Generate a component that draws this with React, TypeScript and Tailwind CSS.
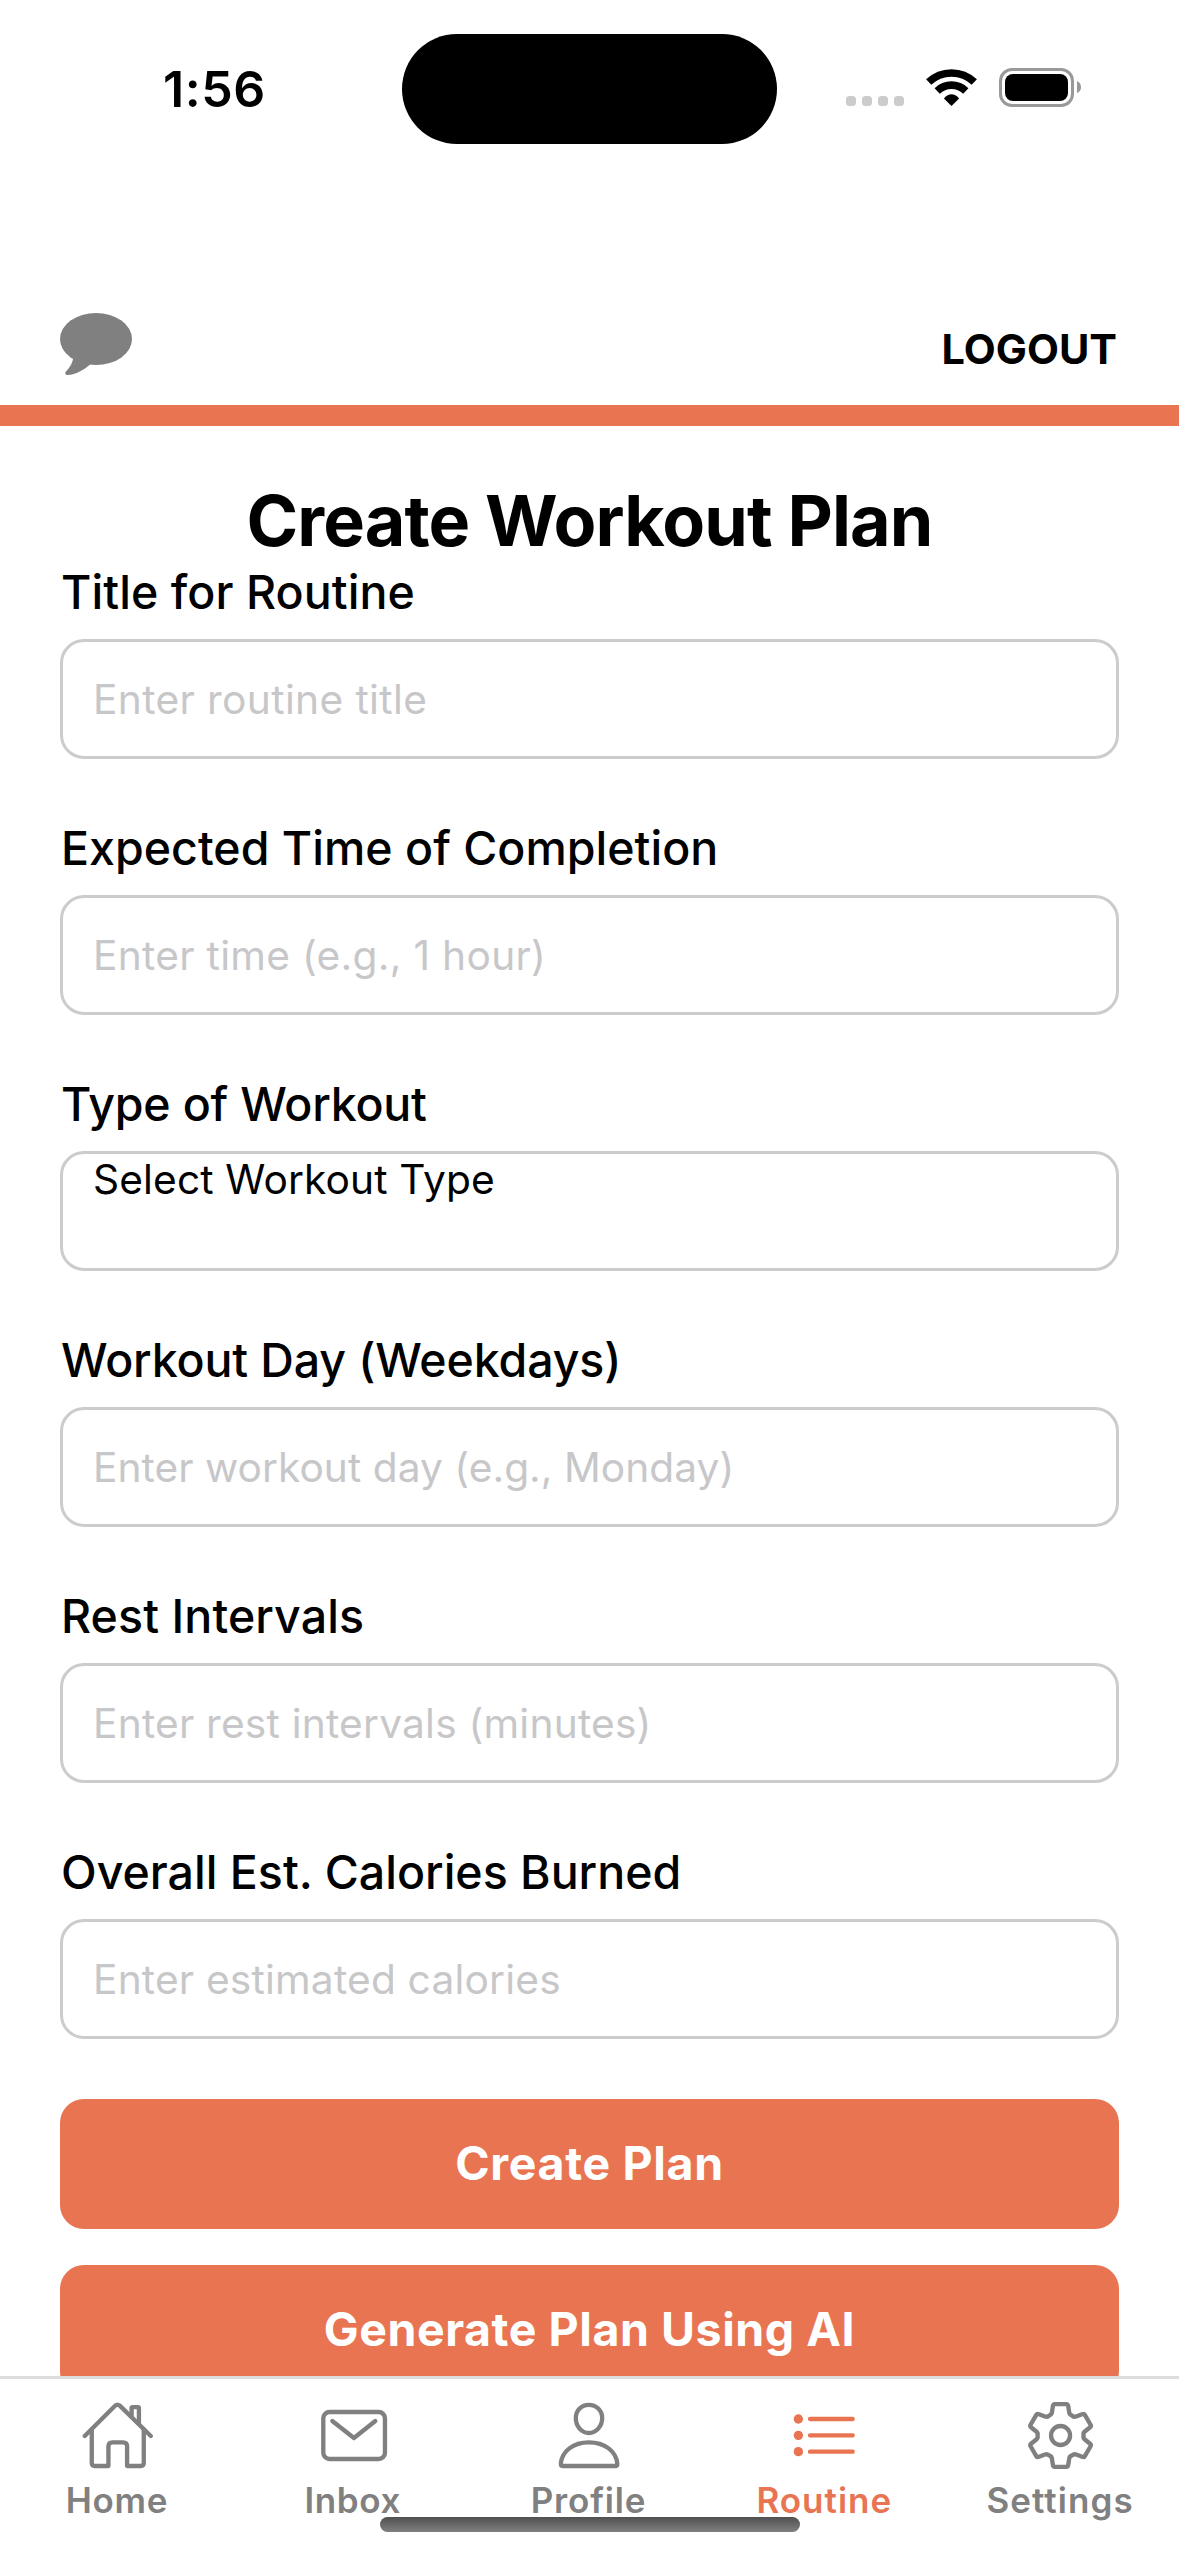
import type { ReactNode } from "react";

type Field = {
  label: string;
  labelTracking: string;
  placeholder: string;
  placeholderTracking: string;
  select?: boolean;
};

const fields: Field[] = [
  { label: "Title for Routine", labelTracking: "tracking-[0.08px]", placeholder: "Enter routine title", placeholderTracking: "tracking-[0.36px]" },
  { label: "Expected Time of Completion", labelTracking: "tracking-[0.02px]", placeholder: "Enter time (e.g., 1 hour)", placeholderTracking: "tracking-[0.28px]" },
  { label: "Type of Workout", labelTracking: "tracking-[-0.2px]", placeholder: "Select Workout Type", placeholderTracking: "tracking-[0.12px]", select: true },
  { label: "Workout Day (Weekdays)", labelTracking: "tracking-[-0.13px]", placeholder: "Enter workout day (e.g., Monday)", placeholderTracking: "tracking-[0.02px]" },
  { label: "Rest Intervals", labelTracking: "tracking-[0.1px]", placeholder: "Enter rest intervals (minutes)", placeholderTracking: "tracking-[0.2px]" },
  { label: "Overall Est. Calories Burned", labelTracking: "tracking-[0px]", placeholder: "Enter estimated calories", placeholderTracking: "tracking-[0.18px]" },
];

/** Six-toothed cog outline, built by rotating one tooth around the centre. */
function gearPath(cx: number, cy: number) {
  const parts: string[] = [];
  for (let i = 0; i < 6; i++) {
    const a = (i * Math.PI) / 3;
    const p = (x: number, y: number) =>
      `${(cx + x * Math.cos(a) - y * Math.sin(a)).toFixed(1)} ${(cy + x * Math.sin(a) + y * Math.cos(a)).toFixed(1)}`;
    parts.push(
      `${i === 0 ? "M" : "L"}${p(-23, -88)}`,
      `Q${p(-22, -94)} ${p(-18, -94)}`,
      `L${p(18, -94)}`,
      `Q${p(22, -94)} ${p(23, -88)}`,
      `L${p(26, -69)}`,
      `Q${p(27, -62)} ${p(34.5, -59.8)}`,
      `Q${p(40.2, -54.4)} ${p(46.8, -57)}`,
    );
  }
  return parts.join("") + "Z";
}

function TabIcon({ viewBox, children }: { viewBox: string; children: ReactNode }) {
  return (
    <svg
      className="size-[72px]"
      viewBox={viewBox}
      fill="none"
      stroke="currentColor"
      strokeWidth="13"
      strokeLinecap="round"
      strokeLinejoin="round"
    >
      {children}
    </svg>
  );
}

const tabs = [
  {
    name: "Home",
    style: "text-[#808080] tracking-[0.69px]",
    icon: (
      <TabIcon viewBox="245.7 117 216 216">
        <path d="M254 228L345 137Q352 131 359 137L452 228" />
        <path d="M275 208V309Q275 318 284 318H325V259Q325 247 337 247H369Q381 247 381 259V318H422Q431 318 431 309V208" />
        <path d="M394.500 170V145Q394.500 141.500 398 141.500H413Q416.500 141.500 416.500 145V192" />
      </TabIcon>
    ),
  },
  {
    name: "Inbox",
    style: "text-[#808080] tracking-[0.62px]",
    icon: (
      <TabIcon viewBox="953.1 117 216 216">
        <rect x="969" y="156" width="185" height="141" rx="19" />
        <path d="M996 183L1061 234L1125 183" />
      </TabIcon>
    ),
  },
  {
    name: "Profile",
    style: "text-[#808080] tracking-[0.81px]",
    icon: (
      <TabIcon viewBox="460.5 117 216 216">
        <path d="M568 134.500C590 134.500 608 151 608 174C608 199 590 219 568 219C546 219 529 199 529 174C529 151 546 134.500 568 134.500Z" />
        <path d="M484 311C487 274 521 247 568 247C616 247 650 274 653.500 311Q653.500 318 647 318H491Q484 318 484 311Z" />
      </TabIcon>
    ),
  },
  {
    name: "Routine",
    style: "text-[#e97451] tracking-[0.99px]",
    icon: (
      <TabIcon viewBox="30.9 117 216 216">
        <g fill="currentColor" stroke="none">
          <circle cx="59" cy="177" r="14" />
          <circle cx="59" cy="226" r="14" />
          <circle cx="59" cy="275" r="14" />
        </g>
        <path d="M94 177H222M94 226H222M94 275H222" />
      </TabIcon>
    ),
  },
  {
    name: "Settings",
    style: "text-[#808080] tracking-[1.07px]",
    icon: (
      <TabIcon viewBox="738.3 117 216 216">
        <path d={gearPath(845, 226.5)} />
        <circle cx="845" cy="226.5" r="28.5" />
      </TabIcon>
    ),
  },
];

function StatusBar() {
  return (
    <div className="flex h-[177px] shrink-0 items-center">
      <div className="w-[402px] pl-[163px] text-[50px] leading-none font-semibold tracking-[0.6px]">1:56</div>
      <div className="mt-px h-[110px] w-[375px] rounded-full bg-black" />
      <svg className="mb-[2px] ml-[69px] h-[40px] w-[235px]" viewBox="846 68 235 40" fill="none">
        <g fill="#cccccc">
          <rect x="846" y="96" width="10" height="10" rx="3.500" />
          <rect x="862" y="96" width="10" height="10" rx="3.500" />
          <rect x="878" y="96" width="10" height="10" rx="3.500" />
          <rect x="894" y="96" width="10" height="10" rx="3.500" />
        </g>
        <g stroke="#000" strokeWidth="7.600">
          <path d="M928.700 82.100A33.100 33.100 0 0 1 974.300 82.100" />
          <path d="M937.200 90.900A20.700 20.700 0 0 1 965.800 90.900" />
        </g>
        <path d="M951.500 106L943.900 98.400Q951.500 90.300 959.100 98.400Z" fill="#000" />
        <rect x="1000.500" y="69.500" width="72" height="36" rx="11.500" stroke="#999999" strokeWidth="3" />
        <rect x="1005" y="74" width="63" height="27" rx="8" fill="#000" />
        <path d="M1077 81Q1081 83 1081 87.200T1077 93Z" fill="#999999" />
      </svg>
    </div>
  );
}

function Header() {
  return (
    <header className="flex h-[228px] shrink-0 justify-between px-[60px] pt-[136px]">
      <svg className="h-[62px] w-[72px]" viewBox="60 313 72 62" fill="#808080">
        <ellipse cx="96" cy="339" rx="36" ry="26" />
        <path d="M73.500 356C73 363 69.500 367.500 66 371.500C64.500 373.500 65.500 375.200 67.500 375C76 374.500 84 370 90.500 364Z" />
      </svg>
      <button className="mt-[6px] mr-[2px] h-[60px] text-[41.5px] leading-[60px] font-bold">LOGOUT</button>
    </header>
  );
}

function FormField({ label, labelTracking, placeholder, placeholderTracking, select }: Field) {
  return (
    <div className="flex flex-col gap-[18px]">
      <label className={`pl-px text-[46.5px] leading-[57px] font-medium ${labelTracking}`}>{label}</label>
      {select ? (
        <div className="h-[120px] rounded-[24px] border-[3px] border-[#cccccc] px-[30px]">
          <span className={`block text-[40.7px] leading-[52px] ${placeholderTracking}`}>{placeholder}</span>
        </div>
      ) : (
        <input
          className={`h-[120px] rounded-[24px] border-[3px] border-[#cccccc] px-[30px] text-[40.7px] placeholder:text-[#c7c7c9] placeholder:opacity-100 ${placeholderTracking}`}
          placeholder={placeholder}
        />
      )}
    </div>
  );
}

export default function App() {
  return (
    <div className="relative flex h-[2556px] w-[1179px] flex-col overflow-hidden bg-white font-[Inter,sans-serif] text-black">
      <StatusBar />
      <Header />
      <div className="h-[21px] shrink-0 bg-[#e97451]" />
      <main className="h-[1950px] shrink-0 overflow-hidden px-[60px] pt-[52px]">
        <h1 className="text-center text-[70px] leading-[86px] font-bold tracking-[-0.88px]">Create Workout Plan</h1>
        <form className="flex flex-col gap-[61px]">
          {fields.map((field) => (
            <FormField key={field.label} {...field} />
          ))}
        </form>
        <div className="mt-[60px] flex flex-col gap-[36px] text-[46.5px] font-bold text-white">
          <button className="h-[130px] shrink-0 rounded-[24px] bg-[#e97451] tracking-[0.66px]">Create Plan</button>
          <button className="h-[130px] shrink-0 rounded-[24px] bg-[#e97451] tracking-[0.55px]">Generate Plan Using AI</button>
        </div>
      </main>
      <nav className="grid flex-1 grid-cols-5 border-t-[3px] border-[#dddddd] pt-[20px]">
        {tabs.map((tab) => (
          <div key={tab.name} className={`flex flex-col items-center gap-[9px] ${tab.style}`}>
            {tab.icon}
            <span className="mr-[2px] text-[35px] leading-[40px] font-semibold">{tab.name}</span>
          </div>
        ))}
      </nav>
      <div className="absolute bottom-[24px] left-[380px] h-[15px] w-[420px] rounded-full bg-linear-to-b from-[#505050] to-[#808080]" />
    </div>
  );
}
